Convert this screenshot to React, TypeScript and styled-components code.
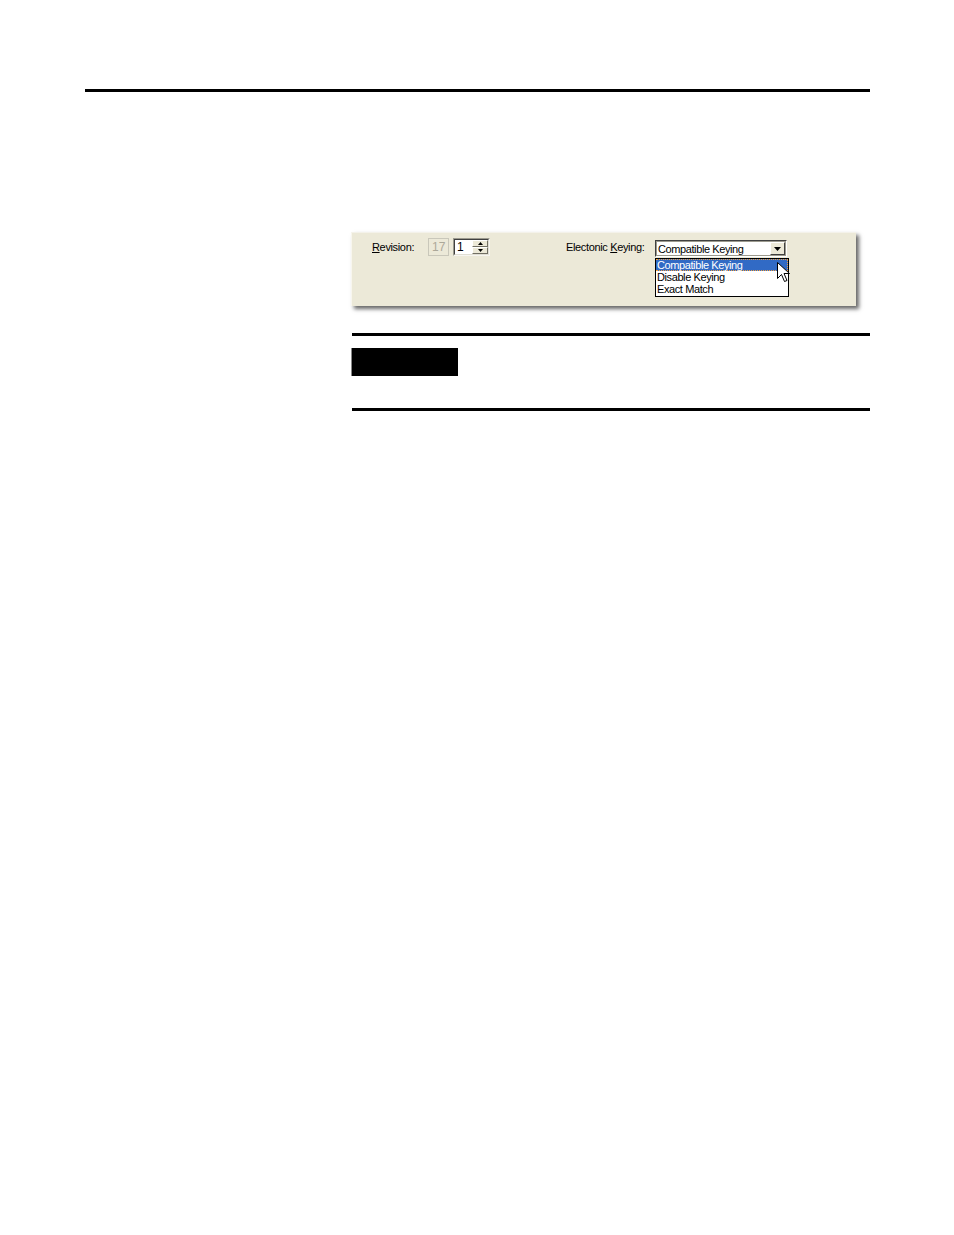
import React from 'react'
import styled, { createGlobalStyle } from 'styled-components'

const GlobalStyle = createGlobalStyle`
    html, body {
        margin: 0;
        padding: 0;
        background: #fff;
    }
    body {
        font-family: "Liberation Sans", Arial, sans-serif;
    }
`

const Page = styled.div`
    width: 954px;
    height: 1235px;
    padding-top: 89px;
    box-sizing: border-box;
`

const Rule = styled.div<{ $left: number; $width: number }>`
    height: 3px;
    background: #000;
    margin-left: ${p => p.$left}px;
    width: ${p => p.$width}px;
`

const Content = styled.div`
    margin-left: 352px;
    width: 518px;
    display: flex;
    flex-direction: column;
`

const Panel = styled.div`
    margin-top: 140px;
    margin-left: -1px;
    width: 505px;
    height: 74px;
    box-sizing: border-box;
    background: #ece9d8;
    border-left: 1px solid #f8f6ee;
    border-top: 1px solid #f4f2ea;
    box-shadow: 3px 3px 4px rgba(0, 0, 0, 0.6);
    display: flex;
    align-items: flex-start;
    padding: 5px 0 0 20px;
    font-size: 11px;
    color: #000;
`

const Label = styled.span<{ $width: number }>`
    width: ${p => p.$width}px;
    line-height: 18px;
    white-space: nowrap;
    letter-spacing: -0.35px;
    u {
        text-decoration: underline;
        text-underline-offset: 1px;
    }
`

const Edit = styled.div<{ $width: number; $disabled?: boolean }>`
    width: ${p => p.$width}px;
    height: 18px;
    box-sizing: border-box;
    border: 1px solid;
    border-color: ${p => (p.$disabled ? '#c9c7ba' : '#9c9a8e #f6f5f0 #f6f5f0 #9c9a8e')};
    background: ${p => (p.$disabled ? '#ece9d8' : '#fff')};
    color: ${p => (p.$disabled ? '#aca899' : '#000')};
    display: flex;
    align-items: center;
    padding-left: 3px;
    font-size: 12px;
    position: relative;
`

const EditInner = styled.div`
    position: absolute;
    inset: 0;
    border: 1px solid #404040;
    border-right-color: #e0ded3;
    border-bottom-color: #e0ded3;
    pointer-events: none;
`

const Spinner = styled.div`
    margin-left: auto;
    margin-right: 1px;
    width: 16px;
    height: 14px;
    display: flex;
    flex-direction: column;
`

const SpinButton = styled.div`
    flex: 1;
    background: #ece9d8;
    border: 1px solid;
    border-color: #fff #716f64 #716f64 #fff;
    display: flex;
    align-items: center;
    justify-content: center;
`

const KeyingGroup = styled.div`
    margin-left: 76px;
    display: flex;
    align-items: flex-start;
`

const ComboWrap = styled.div`
    position: relative;
    margin-top: 2px;
`

const Combo = styled.div`
    width: 132px;
    height: 17px;
    box-sizing: border-box;
    border: 1px solid;
    border-color: #404040 #fff #fff #404040;
    outline: 1px solid #9c9a8e;
    outline-offset: -2px;
    background: #fff;
    display: flex;
    align-items: center;
    padding-left: 2px;
    font-size: 11px;
    letter-spacing: -0.4px;
`

const ComboButton = styled.div`
    margin-left: auto;
    margin-right: 1px;
    width: 15px;
    height: 13px;
    box-sizing: border-box;
    background: #ece9d8;
    border: 1px solid;
    border-color: #fff #404040 #404040 #fff;
    display: flex;
    align-items: center;
    justify-content: center;
`

const List = styled.div`
    position: absolute;
    left: 0;
    top: 18px;
    width: 134px;
    height: 39px;
    box-sizing: border-box;
    border: 1px solid #000;
    background: #fff;
    font-size: 11px;
    letter-spacing: -0.4px;
`

const Item = styled.div<{ $selected?: boolean }>`
    height: 12px;
    line-height: 11px;
    padding-left: 1px;
    white-space: nowrap;
    box-sizing: border-box;
    background: ${p => (p.$selected ? '#316ac5' : 'transparent')};
    color: ${p => (p.$selected ? '#fff' : '#000')};
    border: 1px dotted ${p => (p.$selected ? '#f0a040' : 'transparent')};
    border-left: none;
    border-right-width: ${p => (p.$selected ? '1px' : '0')};
`

const Pointer = styled.svg`
    position: absolute;
    left: 122px;
    top: 22px;
`

const Note = styled.div`
    margin-top: 27px;
    display: flex;
    flex-direction: column;
`

const BlackLabel = styled.div`
    margin-top: 12px;
    width: 106px;
    height: 28px;
    background: #000;
    border-left: 1px solid #888;
    margin-left: -1px;
`

const Spacer = styled.div`
    height: 32px;
`

const Tri = ({ up }: { up?: boolean }) => (
    <svg width="5" height="3" viewBox="0 0 5 3">
        <path d={up ? 'M2.5 0 L5 3 L0 3 Z' : 'M0 0 L5 0 L2.5 3 Z'} fill="#000" />
    </svg>
)

const App = () => {
    return (
        <Page>
            <GlobalStyle />
            <Rule $left={85} $width={785} />
            <Content>
                <Panel>
                    <Label $width={56}>
                        <u>R</u>evision:
                    </Label>
                    <Edit $width={21} $disabled>17</Edit>
                    <Edit $width={37} style={{ marginLeft: 4 }}>
                        <EditInner />
                        1
                        <Spinner>
                            <SpinButton>
                                <Tri up />
                            </SpinButton>
                            <SpinButton>
                                <Tri />
                            </SpinButton>
                        </Spinner>
                    </Edit>
                    <KeyingGroup>
                        <Label $width={89}>
                            Electonic <u>K</u>eying:
                        </Label>
                        <ComboWrap>
                            <Combo>
                                Compatible Keying
                                <ComboButton>
                                    <svg width="7" height="4" viewBox="0 0 7 4">
                                        <path d="M0 0 L7 0 L3.5 4 Z" fill="#000" />
                                    </svg>
                                </ComboButton>
                            </Combo>
                            <List>
                                <Item $selected>Compatible Keying</Item>
                                <Item>Disable Keying</Item>
                                <Item>Exact Match</Item>
                            </List>
                            <Pointer width="13" height="21" viewBox="0 0 13 21">
                                <path
                                    d="M0.5 0.5 L0.5 16.5 L4.5 12.5 L7.5 19.5 L10 18.5 L7 11.5 L12.5 11.5 Z"
                                    fill="#fff"
                                    stroke="#000"
                                    strokeWidth="1"
                                />
                            </Pointer>
                        </ComboWrap>
                    </KeyingGroup>
                </Panel>
                <Note>
                    <Rule $left={0} $width={518} />
                    <BlackLabel />
                    <Spacer />
                    <Rule $left={0} $width={518} />
                </Note>
            </Content>
        </Page>
    )
}

export default App
